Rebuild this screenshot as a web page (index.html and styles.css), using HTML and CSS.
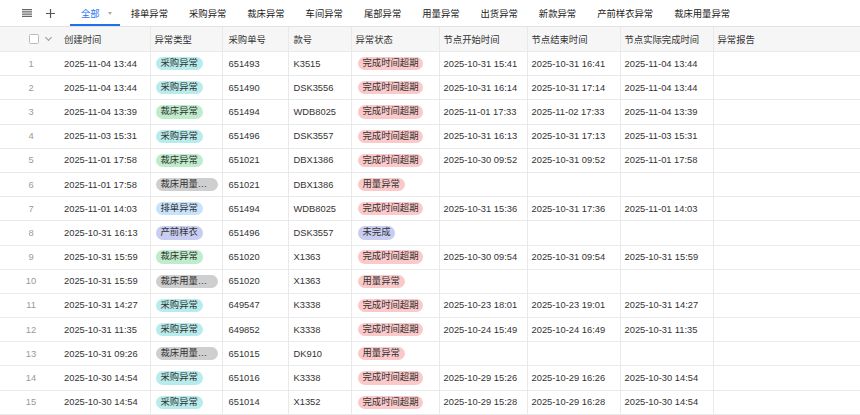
FILE: index.html
```html
<!DOCTYPE html>
<html lang="zh-CN">
<head>
  <meta charset="UTF-8" />
  <title>异常列表</title>
  <link rel="stylesheet" href="styles.css">
</head>
<body>

<!-- Tab bar -->
<div class="toolbar">
  <span class="icon-btn">
    <svg width="10" height="8" viewBox="0 0 10 8"><path d="M0 0.6H10M0 2.9H10M0 5.1H10M0 7.4H10" stroke="#666" stroke-width="1.1"/></svg>
  </span>
  <span class="icon-btn plus">
    <svg width="9" height="9" viewBox="0 0 9 9"><path d="M4.5 0V9M0 4.5H9" stroke="#555" stroke-width="1.2"/></svg>
  </span>
  <div class="tabs">
    <div class="tab active">全部<span class="caret"></span></div>
    <div class="tab">排单异常</div>
    <div class="tab">采购异常</div>
    <div class="tab">裁床异常</div>
    <div class="tab">车间异常</div>
    <div class="tab">尾部异常</div>
    <div class="tab">用量异常</div>
    <div class="tab">出货异常</div>
    <div class="tab">新款异常</div>
    <div class="tab">产前样衣异常</div>
    <div class="tab">裁床用量异常</div>
  </div>
</div>

<!-- Table -->
<table class="grid">
  <colgroup>
    <col style="width:56px"><col style="width:94px"><col style="width:72px"><col style="width:66px"><col style="width:63px">
    <col style="width:88px"><col style="width:88px"><col style="width:93px"><col style="width:93px"><col style="width:147px">
  </colgroup>
  <thead>
    <tr>
      <th class="sel"><span class="check"></span><span class="chev"></span></th>
      <th class="first">创建时间</th>
      <th>异常类型</th>
      <th>采购单号</th>
      <th>款号</th>
      <th>异常状态</th>
      <th>节点开始时间</th>
      <th>节点结束时间</th>
      <th>节点实际完成时间</th>
      <th>异常报告</th>
    </tr>
  </thead>
  <tbody>
    <tr><td class="num">1</td><td class="first">2025-11-04 13:44</td><td><span class="tag cyan">采购异常</span></td><td>651493</td><td>K3515</td><td><span class="tag red">完成时间超期</span></td><td>2025-10-31 15:41</td><td>2025-10-31 16:41</td><td>2025-11-04 13:44</td><td></td></tr>
    <tr><td class="num">2</td><td class="first">2025-11-04 13:44</td><td><span class="tag cyan">采购异常</span></td><td>651490</td><td>DSK3556</td><td><span class="tag red">完成时间超期</span></td><td>2025-10-31 16:14</td><td>2025-10-31 17:14</td><td>2025-11-04 13:44</td><td></td></tr>
    <tr><td class="num">3</td><td class="first">2025-11-04 13:39</td><td><span class="tag green">裁床异常</span></td><td>651494</td><td>WDB8025</td><td><span class="tag red">完成时间超期</span></td><td>2025-11-01 17:33</td><td>2025-11-02 17:33</td><td>2025-11-04 13:39</td><td></td></tr>
    <tr><td class="num">4</td><td class="first">2025-11-03 15:31</td><td><span class="tag cyan">采购异常</span></td><td>651496</td><td>DSK3557</td><td><span class="tag red">完成时间超期</span></td><td>2025-10-31 16:13</td><td>2025-10-31 17:13</td><td>2025-11-03 15:31</td><td></td></tr>
    <tr><td class="num">5</td><td class="first">2025-11-01 17:58</td><td><span class="tag green">裁床异常</span></td><td>651021</td><td>DBX1386</td><td><span class="tag red">完成时间超期</span></td><td>2025-10-30 09:52</td><td>2025-10-31 09:52</td><td>2025-11-01 17:58</td><td></td></tr>
    <tr><td class="num">6</td><td class="first">2025-11-01 17:58</td><td><span class="tag grey">裁床用量异常</span></td><td>651021</td><td>DBX1386</td><td><span class="tag red">用量异常</span></td><td></td><td></td><td></td><td></td></tr>
    <tr><td class="num">7</td><td class="first">2025-11-01 14:03</td><td><span class="tag blue">排单异常</span></td><td>651494</td><td>WDB8025</td><td><span class="tag red">完成时间超期</span></td><td>2025-10-31 15:36</td><td>2025-10-31 17:36</td><td>2025-11-01 14:03</td><td></td></tr>
    <tr><td class="num">8</td><td class="first">2025-10-31 16:13</td><td><span class="tag purple">产前样衣</span></td><td>651496</td><td>DSK3557</td><td><span class="tag purple">未完成</span></td><td></td><td></td><td></td><td></td></tr>
    <tr><td class="num">9</td><td class="first">2025-10-31 15:59</td><td><span class="tag green">裁床异常</span></td><td>651020</td><td>X1363</td><td><span class="tag red">完成时间超期</span></td><td>2025-10-30 09:54</td><td>2025-10-31 09:54</td><td>2025-10-31 15:59</td><td></td></tr>
    <tr><td class="num">10</td><td class="first">2025-10-31 15:59</td><td><span class="tag grey">裁床用量异常</span></td><td>651020</td><td>X1363</td><td><span class="tag red">用量异常</span></td><td></td><td></td><td></td><td></td></tr>
    <tr><td class="num">11</td><td class="first">2025-10-31 14:27</td><td><span class="tag cyan">采购异常</span></td><td>649547</td><td>K3338</td><td><span class="tag red">完成时间超期</span></td><td>2025-10-23 18:01</td><td>2025-10-23 19:01</td><td>2025-10-31 14:27</td><td></td></tr>
    <tr><td class="num">12</td><td class="first">2025-10-31 11:35</td><td><span class="tag cyan">采购异常</span></td><td>649852</td><td>K3338</td><td><span class="tag red">完成时间超期</span></td><td>2025-10-24 15:49</td><td>2025-10-24 16:49</td><td>2025-10-31 11:35</td><td></td></tr>
    <tr><td class="num">13</td><td class="first">2025-10-31 09:26</td><td><span class="tag grey">裁床用量异常</span></td><td>651015</td><td>DK910</td><td><span class="tag red">用量异常</span></td><td></td><td></td><td></td><td></td></tr>
    <tr><td class="num">14</td><td class="first">2025-10-30 14:54</td><td><span class="tag cyan">采购异常</span></td><td>651016</td><td>K3338</td><td><span class="tag red">完成时间超期</span></td><td>2025-10-29 15:26</td><td>2025-10-29 16:26</td><td>2025-10-30 14:54</td><td></td></tr>
    <tr><td class="num">15</td><td class="first">2025-10-30 14:54</td><td><span class="tag cyan">采购异常</span></td><td>651014</td><td>X1352</td><td><span class="tag red">完成时间超期</span></td><td>2025-10-29 15:28</td><td>2025-10-29 16:28</td><td>2025-10-30 14:54</td><td></td></tr>
  </tbody>
</table>

</body>
</html>
```

FILE: styles.css
```css
body {
  font-family: "Liberation Sans", "Noto Sans CJK SC", sans-serif;
  font-size: 9.33px;
  color: #333;
  background: #fff;
  margin: 0;
  padding: 0;
  overflow: hidden;
}
.toolbar {
  display: flex;
  align-items: center;
  height: 26px;
  padding-left: 22px;
  border-bottom: 1px solid #e3e3e3;
}
.icon-btn {
  display: flex;
  align-items: center;
}
.icon-btn.plus {
  margin-left: 14px;
  margin-right: 15px;
}
.tabs {
  display: flex;
  height: 100%;
}
.tab {
  display: flex;
  align-items: center;
  padding: 0 10.5px;
  color: #222;
  white-space: nowrap;
}
.tab.active {
  padding: 0 8.5px 0 11px;
  color: #2a73f0;
  box-shadow: inset 0 -2px 0 #1f6fe8;
}
.caret {
  width: 0;
  height: 0;
  margin-left: 8px;
  border-left: 2.5px solid transparent;
  border-right: 2.5px solid transparent;
  border-top: 3px solid #aaa;
}
.grid {
  width: 860px;
  table-layout: fixed;
  border-collapse: collapse;
}
.grid th,
.grid td {
  height: 23.2px;
  padding: 0 4px;
  border-left: 1px solid #e9e9e9;
  border-bottom: 1px solid #e9e9e9;
  text-align: left;
  white-space: nowrap;
  overflow: hidden;
  vertical-align: middle;
}
.grid th {
  height: 24px;
  font-weight: normal;
  background: #f6f6f6;
  color: #333;
}
.grid th:first-child,
.grid td:first-child {
  border-left: none;
}
.grid .first {
  border-left: none;
  padding-left: 8px;
}
.grid td:nth-child(4),
.grid th:nth-child(4) {
  padding-left: 6px;
}
.grid td:nth-child(5),
.grid th:nth-child(5) {
  padding-left: 5px;
}
.grid td:nth-child(3) {
  padding-left: 5px;
}
.grid td:nth-child(6) {
  padding-left: 6px;
}
.grid .num {
  padding-left: 10px;
  text-align: center;
  color: #999;
}
.grid .sel {
  padding-left: 29px;
}
.check {
  display: inline-block;
  width: 8px;
  height: 8px;
  border: 1px solid #bbb;
  border-radius: 1.5px;
  background: #fff;
  vertical-align: middle;
}
.chev {
  display: inline-block;
  width: 4px;
  height: 4px;
  margin-left: 7px;
  border-right: 1px solid #999;
  border-bottom: 1px solid #999;
  transform: translateY(-2px) rotate(45deg);
  vertical-align: middle;
}
.tag {
  display: inline-block;
  max-width: 52px;
  height: 13.3px;
  line-height: 13.3px;
  padding: 0 5px;
  border-radius: 7px;
  color: #333;
  overflow: hidden;
  text-overflow: ellipsis;
  vertical-align: middle;
}
.tag.red {
  max-width: none;
}
.cyan { background: #b8ecec; }
.green { background: #bfeccb; }
.blue { background: #c7e3fb; }
.purple { background: #c9cdf2; }
.grey { background: #cfcfcf; }
.red { background: #fbc9c9; }
```
